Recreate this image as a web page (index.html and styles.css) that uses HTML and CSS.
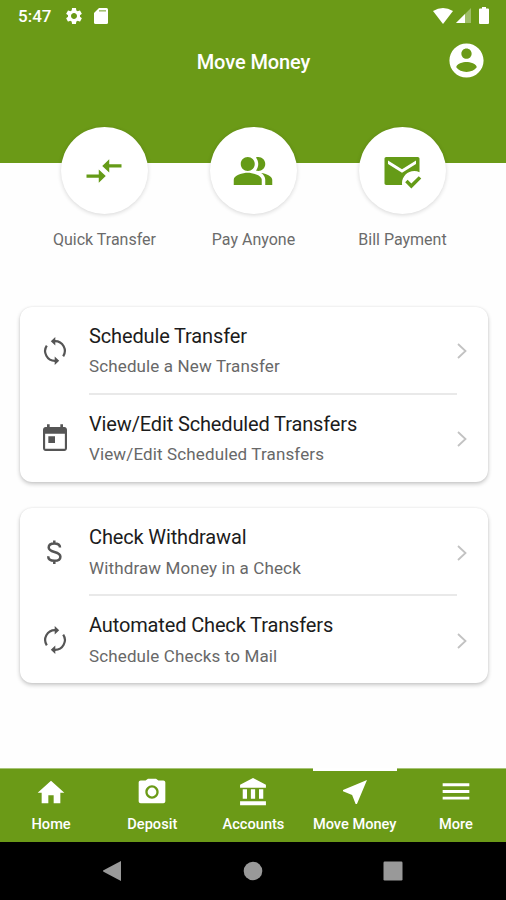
FILE: index.html
```
<!DOCTYPE html>
<html lang="en">
<head>
<meta charset="utf-8">
<title>Move Money</title>
<link rel="stylesheet" href="styles.css">
</head>
<body>
<div class="app">
  <header class="header">
    <div class="status">
      <div class="status-left">
        <span class="time">5:47</span>
        <svg class="cog" viewBox="0 0 24 24"><path fill-rule="evenodd" d="M19.14 12.94c.04-.3.06-.61.06-.94s-.02-.64-.07-.94l2.03-1.58c.18-.14.23-.41.12-.61l-1.92-3.32c-.12-.22-.37-.29-.59-.22l-2.39.96c-.5-.38-1.03-.7-1.62-.94l-.36-2.54c-.04-.24-.24-.41-.48-.41h-3.84c-.24 0-.43.17-.47.41l-.36 2.54c-.59.24-1.13.57-1.62.94l-2.39-.96c-.22-.08-.47 0-.59.22L2.74 8.87c-.12.21-.08.47.12.61l2.03 1.58c-.05.3-.09.63-.09.94s.02.64.07.94l-2.03 1.58c-.18.14-.23.41-.12.61l1.92 3.32c.12.22.37.29.59.22l2.39-.96c.5.38 1.03.7 1.62.94l.36 2.54c.05.24.24.41.48.41h3.84c.24 0 .44-.17.47-.41l.36-2.54c.59-.24 1.13-.56 1.62-.94l2.39.96c.22.08.47 0 .59-.22l1.92-3.32c.12-.22.07-.47-.12-.61l-2.01-1.58zM12 15.6c-1.98 0-3.6-1.62-3.6-3.6s1.62-3.6 3.6-3.6 3.6 1.62 3.6 3.6-1.62 3.6-3.6 3.6z"/></svg>
        <svg class="sd" viewBox="0 0 14 16"><path d="M5 0h7.5Q14 0 14 1.500v13Q14 16 12.500 16h-11Q0 16 0 14.500V5z"/><path class="slot" d="M5 2h7v1.600H5z"/></svg>
      </div>
      <div class="status-right">
        <svg class="wifi" viewBox="0 0 20 16"><path d="M0 3Q10-3 20 3L10 16z"/></svg>
        <svg class="signal" viewBox="0 0 15 15"><path opacity=".35" d="M15 0v15H0z"/><path d="M9 6v9H0z"/></svg>
        <svg class="battery" viewBox="0 0 10 17"><path d="M3 0h4v1.500h2q1 0 1 1v13.500q0 1-1 1H1q-1 0-1-1V2.500q0-1 1-1h2z"/></svg>
      </div>
    </div>
    <div class="titlebar">
      <h1>Move Money</h1>
      <svg class="account" viewBox="0 0 24 24"><path d="M12 2C6.480 2 2 6.480 2 12s4.480 10 10 10 10-4.480 10-10S17.520 2 12 2zm0 3c1.660 0 3 1.340 3 3s-1.340 3-3 3-3-1.340-3-3 1.340-3 3-3zm0 13.700c-2.500 0-4.710-.900-6-2.720.03-1.990 4-3.080 6-3.080 1.990 0 5.970 1.090 6 3.080-1.290 1.820-3.500 2.720-6 2.720z"/></svg>
    </div>
  </header>

  <section class="actions">
    <div class="action">
      <div class="disc"><svg viewBox="0 0 24 24"><path d="M9.010 14H2v1.800h7.010v2.900L13 14.900l-3.990-3.800V14zm5.980-1.100v-2.900H22V8.200h-7.010V5.300L11 9.100z"/></svg></div>
      <span>Quick Transfer</span>
    </div>
    <div class="action">
      <div class="disc"><svg viewBox="0 0 24 24"><path d="M16.670 13.130C18.040 14.060 19 15.320 19 17v3h4v-3c0-2.180-3.570-3.470-6.330-3.870zM15 12c2.210 0 4-1.790 4-4s-1.790-4-4-4c-.47 0-.91.1-1.330.24C14.500 5.270 15 6.580 15 8s-.5 2.730-1.330 3.760c.42.14.86.24 1.330.24zM9 12c2.210 0 4-1.790 4-4s-1.790-4-4-4-4 1.790-4 4 1.790 4 4 4zM9 13c-2.670 0-8 1.340-8 4v3h16v-3c0-2.660-5.330-4-8-4z"/></svg></div>
      <span>Pay Anyone</span>
    </div>
    <div class="action">
      <div class="disc"><svg viewBox="0 0 24 24"><path d="M12 19c0-3.870 3.130-7 7-7 1.080 0 2.090.25 3 .68V5c0-.6-.4-1-1-1H3c-.6 0-1 .4-1 1v14c0 .6.4 1 1 1h9.080c-.05-.33-.08-.66-.08-1zM4 6l8 5 8-5v2l-8 5-8-5V6zm13.340 16l-3.540-3.540 1.410-1.410 2.120 2.120 4.240-4.240L23 16.340 17.340 22z"/></svg></div>
      <span>Bill Payment</span>
    </div>
  </section>

  <main class="cards">
    <section class="card">
      <div class="row">
        <svg class="icon arcs" viewBox="0 0 28 28"><path class="arc" d="M13 4.200h1A9.800 9.800 0 0 1 22.200 19.400M15 23.800h-1A9.800 9.800 0 0 1 5.800 8.600"/><path d="M14.300 0v8.600L9.800 4.300zM13.700 28v-8.600l4.500 4.300z"/></svg>
        <div class="body"><div class="name">Schedule Transfer</div><div class="desc">Schedule a New Transfer</div></div>
        <svg class="chev" viewBox="0 0 10 16"><path d="M1 1l7.500 7L1 15"/></svg>
      </div>
      <div class="row">
        <svg class="icon" viewBox="0 0 24 24"><path d="M19 3h-1V1h-2v2H8V1H6v2H5c-1.110 0-2 .9-2 2v14c0 1.100.89 2 2 2h14c1.100 0 2-.9 2-2V5c0-1.100-.9-2-2-2zm.400 16.400H4.600V8h14.800v11.400zM7 10h5v5H7z"/></svg>
        <div class="body"><div class="name">View/Edit Scheduled Transfers</div><div class="desc">View/Edit Scheduled Transfers</div></div>
        <svg class="chev" viewBox="0 0 10 16"><path d="M1 1l7.500 7L1 15"/></svg>
      </div>
    </section>
    <section class="card lower">
      <div class="row">
        <svg class="icon arcs" viewBox="0 0 28 28"><path class="arc dollar" d="M19 9.600C19 6.800 16.800 5.500 13.200 5.500S7.700 7 7.700 9.500c0 5.800 11.700 3.200 11.700 9.200 0 2.700-2.400 4.100-6 4.100-3.700 0-6.200-1.500-6.200-4.500M13.300 2.500v3M13.300 23v3"/></svg>
        <div class="body"><div class="name">Check Withdrawal</div><div class="desc">Withdraw Money in a Check</div></div>
        <svg class="chev" viewBox="0 0 10 16"><path d="M1 1l7.500 7L1 15"/></svg>
      </div>
      <div class="row">
        <svg class="icon arcs" viewBox="0 0 28 28"><path class="arc" d="M15 4.200h-1A9.800 9.800 0 0 0 5.800 19.400M13 23.800h1A9.800 9.800 0 0 0 22.200 8.600"/><path d="M13.700 0v8.600l4.500-4.300zM14.300 28v-8.600l-4.500 4.300z"/></svg>
        <div class="body"><div class="name">Automated Check Transfers</div><div class="desc">Schedule Checks to Mail</div></div>
        <svg class="chev" viewBox="0 0 10 16"><path d="M1 1l7.500 7L1 15"/></svg>
      </div>
    </section>
  </main>

  <nav class="tabs">
    <div class="tab"><svg viewBox="0 0 24 24"><path d="M10 20.500v-6h4v6h5v-8h3L12 3.500 2 12.500h3v8z"/></svg><span>Home</span></div>
    <div class="tab"><svg viewBox="0 0 24 24"><circle cx="12" cy="12" r="3.300"/><path d="M9 2L7.170 3.300H3.500c-.8 0-1.500.7-1.500 1.500v14.200c0 .8.7 1.500 1.500 1.500h17c.8 0 1.500-.7 1.500-1.500V4.800c0-.8-.7-1.500-1.500-1.500h-3.670L15 2H9zm3 15c-2.760 0-5-2.240-5-5s2.240-5 5-5 5 2.240 5 5-2.240 5-5 5z"/></svg><span>Deposit</span></div>
    <div class="tab"><svg viewBox="0 0 24 24"><path d="M4.300 10v7h3.200v-7zm6.100 0v7h3.200v-7zM2.300 22h19.400v-3H2.300zm14.200-12v7h3.200v-7zM12 1.500L2.300 6.500v2.300h19.400V6.500z"/></svg><span>Accounts</span></div>
    <div class="tab active"><svg viewBox="0 0 24 24"><path d="M21 3L3 10.530v.980l6.840 2.650L12.480 21h.980L21 3z"/></svg><span>Move Money</span></div>
    <div class="tab"><svg viewBox="0 0 24 24"><path d="M2 5.500h20v2.200H2zm0 5h20v2.200H2zm0 5h20v2.200H2z"/></svg><span>More</span></div>
  </nav>
  <footer class="system">
    <svg viewBox="0 0 20 20"><path d="M18 0v20L.5 10.700q-1-.700 0-1.400z"/></svg>
    <svg viewBox="0 0 20 20"><circle cx="10" cy="10" r="9.300"/></svg>
    <svg viewBox="0 0 20 20"><rect x=".5" y=".5" width="19" height="19" rx="1.200"/></svg>
  </footer>
</div>
</body>
</html>
```
FILE: styles.css
```
* { box-sizing: border-box; }
body { margin: 0; background: #fff; font-family: Roboto, "Liberation Sans", sans-serif; }
svg { display: block; fill: currentColor; flex: none; }
.app { width: 506px; height: 900px; display: flex; flex-direction: column; overflow: hidden; background: #fefefe; }

.header { height: 163px; flex: none; background: #6b9a17; color: #fff; }
.status { height: 31px; padding: 0 17px 0 18px; display: flex; justify-content: space-between; }
.status-left, .status-right { display: flex; align-items: center; }
.time { font-size: 17px; font-weight: 500; width: 46px; padding-top: 1px; }
.cog { width: 20px; height: 20px; margin-right: 10px; }
.sd { width: 14px; height: 16px; }
.slot { fill: #a5c274; }
.wifi { width: 20px; height: 16px; margin-right: 3px; }
.signal { width: 15px; height: 15px; margin-right: 8px; }
.battery { width: 10px; height: 17px; }
.titlebar { height: 60px; display: grid; grid-template-columns: 60px 1fr 60px; align-items: center; }
.titlebar h1 { grid-column: 2; margin: 0; text-align: center; font-size: 20px; font-weight: 500; line-height: 24px; padding: 2px 0 0 1px; letter-spacing: -.1px; }
.account { width: 41px; height: 41px; margin: -2px 0 0 -.5px; }

.actions { flex: none; display: grid; grid-template-columns: repeat(3, 149px); justify-content: center; margin-top: -36px; height: 180px; }
.action { display: flex; flex-direction: column; align-items: center; color: #6b6b6b; font-size: 16px; line-height: 20px; white-space: nowrap; }
.action span { padding-left: 1px; }
.disc { width: 87px; height: 87px; border-radius: 50%; background: #fff; color: #659b17; display: grid; place-items: center; box-shadow: 0 1px 4px rgba(0,0,0,.16); margin-bottom: 16px; }
.disc svg { width: 42px; height: 42px; }

.cards { flex: 1; padding: 0 18px 0 20px; display: flex; flex-direction: column; gap: 26px; }
.card { height: 175px; background: #fff; border-radius: 12px; box-shadow: 0 2px 4px rgba(0,0,0,.22), 0 0 2px rgba(0,0,0,.08); }
.row { height: 88px; display: grid; grid-template-columns: 69px 1fr 31px; align-items: center; }
.icon { width: 32px; height: 32px; margin-left: 19px; color: #555; }
.icon.arcs { width: 28px; height: 28px; margin-left: 21px; }
.arc { fill: none; stroke: currentColor; stroke-width: 2.2; }
.arc.dollar { stroke-width: 2.5; }
.body { height: 88px; padding-top: 17px; white-space: nowrap; }
.row:first-child .body { border-bottom: 2px solid #e9e9e9; }
.name { font-size: 20px; line-height: 24px; letter-spacing: -.14px; color: #1c1c1c; }
.desc { margin-top: 7px; font-size: 17px; line-height: 22px; letter-spacing: .13px; color: #686868; }
.lower .desc { margin-top: 8px; }
.lower .chev { margin-top: 1px; }
.chev { width: 10px; height: 16px; fill: none; stroke: #c2c2c2; stroke-width: 1.8; }

.tabs { height: 74px; flex: none; background: #6b9a17; color: #fff; display: grid; grid-template-columns: repeat(5, 1fr); border-top: 1px solid #a7c477; }
.tab { display: flex; flex-direction: column; align-items: center; padding: 7px 0 0 1px; font-size: 14.6px; font-weight: 500; line-height: 18px; position: relative; white-space: nowrap; }
.tab svg { width: 32px; height: 32px; margin-bottom: 7px; }
.tab.active::before { content: ""; position: absolute; top: -1px; left: 9px; width: 84px; height: 3px; background: #fff; }
.system { height: 58px; flex: none; background: #000; color: #999; display: flex; align-items: center; justify-content: center; gap: 120px; }
.system svg { width: 20px; height: 20px; }
```
